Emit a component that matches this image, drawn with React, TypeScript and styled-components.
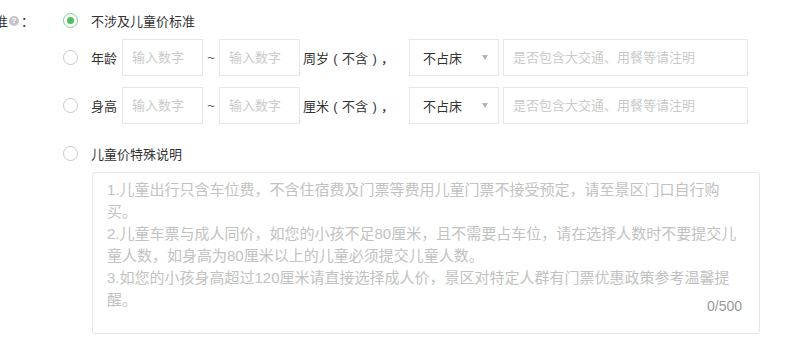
import * as React from 'react';
import styled, { createGlobalStyle } from 'styled-components';

const GlobalStyle = createGlobalStyle`
  body {
    margin: 0;
    background: #fff;
    color: #333;
    font-family: "Liberation Sans", "Noto Sans CJK SC", sans-serif;
  }
`;

const FormRow = styled.div`
  display: flex;
  align-items: flex-start;
  padding-top: 2px;
`;

const FieldLabel = styled.div`
  width: 34px;
  height: 37px;
  flex-shrink: 0;
  display: flex;
  align-items: center;
  justify-content: flex-end;
  white-space: nowrap;
  font-size: 13px;
  color: #333;

  & > * {
    flex-shrink: 0;
  }
`;

const HelpIcon = styled.span`
  width: 10px;
  height: 10px;
  margin: 0 2px 0 1px;
  border-radius: 50%;
  background: #c6c6c6;
  color: #fff;
  font-size: 8px;
  font-weight: bold;
  line-height: 10px;
  text-align: center;
`;

const Options = styled.div`
  display: flex;
  flex-direction: column;
  margin-left: 29px;
`;

const OptionRow = styled.div<{ $spaced?: boolean }>`
  display: flex;
  align-items: center;
  height: 37px;
  margin-top: ${(p) => (p.$spaced ? 11 : 0)}px;
`;

const Radio = styled.span<{ $checked?: boolean }>`
  position: relative;
  width: 15px;
  height: 15px;
  box-sizing: border-box;
  flex-shrink: 0;
  margin-right: 13px;
  border-radius: 50%;
  border: 1px solid ${(p) => (p.$checked ? '#7fd08c' : '#c9c9c9')};
  background: #fff;

  &::after {
    content: '';
    display: ${(p) => (p.$checked ? 'block' : 'none')};
    position: absolute;
    left: 3px;
    top: 3px;
    width: 7px;
    height: 7px;
    border-radius: 50%;
    background: #4dbd5e;
  }
`;

const OptionText = styled.span<{ $gap?: number }>`
  margin-right: ${(p) => p.$gap ?? 0}px;
  font-size: 13px;
  color: #333;
  white-space: nowrap;
`;

const NumberInput = styled.input`
  width: 81px;
  height: 37px;
  box-sizing: border-box;
  padding: 0 9px;
  border: 1px solid #e6e6e6;
  border-radius: 0;
  outline: none;
  font-family: inherit;
  font-size: 13px;
  color: #333;

  &::placeholder {
    color: #cacaca;
  }
`;

const Tilde = styled.span`
  width: 16px;
  text-align: center;
  font-size: 13px;
  color: #555;
`;

const UnitText = styled.span`
  width: 106px;
  margin-left: 3px;
  font-size: 13px;
  color: #333;
  white-space: nowrap;
`;

const Paren = styled.span`
  display: inline-block;
  width: 13px;
  text-align: center;
`;

const SelectBox = styled.div`
  width: 90px;
  height: 37px;
  box-sizing: border-box;
  display: flex;
  align-items: center;
  justify-content: space-between;
  padding: 0 10px 0 13px;
  border: 1px solid #e6e6e6;
  font-size: 13px;
  color: #333;
  cursor: pointer;
`;

const Caret = styled.span`
  width: 0;
  height: 0;
  border-left: 3.5px solid transparent;
  border-right: 3.5px solid transparent;
  border-top: 5px solid #b3b3b3;
`;

const NoteInput = styled(NumberInput)`
  width: 245px;
  margin-left: 4px;
`;

const TextAreaWrap = styled.div`
  position: relative;
  width: 668px;
  height: 162px;
  margin-left: 29px;
`;

const TextArea = styled.textarea`
  width: 100%;
  height: 100%;
  box-sizing: border-box;
  padding: 6px 13px 0 14px;
  border: 1px solid #e6e6e6;
  border-radius: 3px;
  outline: none;
  resize: none;
  font-family: inherit;
  font-size: 15px;
  line-height: 22px;
  color: #333;

  &::placeholder {
    color: #c2c2c2;
  }
`;

const Counter = styled.span`
  position: absolute;
  right: 18px;
  bottom: 20px;
  font-size: 14px;
  line-height: 16px;
  color: #999;
`;

const placeholderText = [
  '1.儿童出行只含车位费，不含住宿费及门票等费用儿童门票不接受预定，请至景区门口自行购买。',
  '2.儿童车票与成人同价，如您的小孩不足80厘米，且不需要占车位，请在选择人数时不要提交儿童人数，如身高为80厘米以上的儿童必须提交儿童人数。',
  '3.如您的小孩身高超过120厘米请直接选择成人价，景区对特定人群有门票优惠政策参考温馨提醒。'
].join('\n');

interface RangeRowProps {
  label: string;
  unit: string;
}

const RangeRow = ({ label, unit }: RangeRowProps) => (
  <OptionRow $spaced={label === '身高'}>
    <Radio />
    <OptionText $gap={5}>{label}</OptionText>
    <NumberInput placeholder="输入数字" />
    <Tilde>~</Tilde>
    <NumberInput placeholder="输入数字" />
    <UnitText>
      {unit}
      <Paren>(</Paren>不含<Paren>)</Paren>，
    </UnitText>
    <SelectBox>
      不占床
      <Caret />
    </SelectBox>
    <NoteInput placeholder="是否包含大交通、用餐等请注明" />
  </OptionRow>
);

export default function App() {
  return (
    <>
      <GlobalStyle />
      <FormRow>
        <FieldLabel>
          <span>儿童价标准</span>
          <HelpIcon>?</HelpIcon>
          <span>：</span>
        </FieldLabel>
        <Options>
          <OptionRow>
            <Radio $checked />
            <OptionText>不涉及儿童价标准</OptionText>
          </OptionRow>
          <RangeRow label="年龄" unit="周岁" />
          <RangeRow label="身高" unit="厘米" />
          <OptionRow $spaced>
            <Radio />
            <OptionText>儿童价特殊说明</OptionText>
          </OptionRow>
          <TextAreaWrap>
            <TextArea placeholder={placeholderText} />
            <Counter>0/500</Counter>
          </TextAreaWrap>
        </Options>
      </FormRow>
    </>
  );
}
